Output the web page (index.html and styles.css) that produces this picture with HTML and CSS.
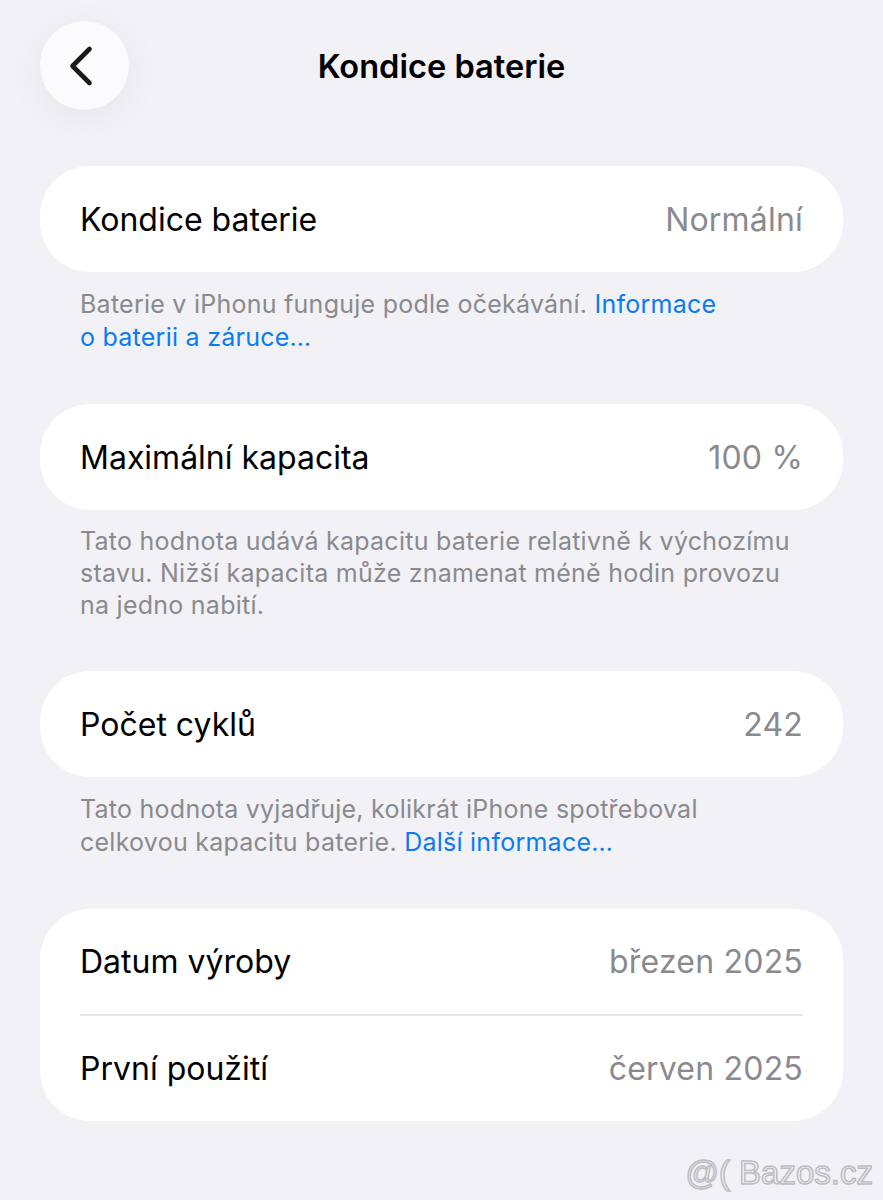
FILE: index.html
```html
<!DOCTYPE html>
<html lang="cs">
<head>
    <meta charset="UTF-8">
    <title>Kondice baterie</title>
    <link rel="stylesheet" href="styles.css">
</head>
<body>
<div class="screen">
    <header class="top-bar">
        <button class="back-btn" aria-label="Zpět">
            <svg width="26" height="42" viewBox="0 0 26 42"><path d="M21.5 4 L4.5 21 L21.5 38" fill="none" stroke="#1a1a1e" stroke-width="4.6" stroke-linecap="round" stroke-linejoin="round"/></svg>
        </button>
        <h1>Kondice baterie</h1>
    </header>

    <section class="card">
        <div class="row"><span>Kondice baterie</span><span class="value">Normální</span></div>
    </section>
    <p class="note">Baterie v iPhonu funguje podle očekávání. <a href="#">Informace<br>o baterii a záruce…</a></p>

    <section class="card">
        <div class="row"><span>Maximální kapacita</span><span class="value">100 %</span></div>
    </section>
    <p class="note note-long">Tato hodnota udává kapacitu baterie relativně k výchozímu<br>stavu. Nižší kapacita může znamenat méně hodin provozu<br>na jedno nabití.</p>

    <section class="card">
        <div class="row"><span>Počet cyklů</span><span class="value">242</span></div>
    </section>
    <p class="note">Tato hodnota vyjadřuje, kolikrát iPhone spotřeboval<br>celkovou kapacitu baterie. <a href="#">Další informace…</a></p>

    <section class="card">
        <div class="row row-short"><span>Datum výroby</span><span class="value">březen 2025</span></div>
        <div class="divider"></div>
        <div class="row row-short"><span>První použití</span><span class="value">červen 2025</span></div>
    </section>

    <div class="watermark">@( Bazos.cz</div>
</div>
</body>
</html>
```

FILE: styles.css
```css
body {
    margin: 0;
    background-color: #f1f1f6;
    font-family: Inter, "Liberation Sans", sans-serif;
    color: #000;
}

.screen {
    position: relative;
    height: 1200px;
    padding: 21px 40px 0;
    box-sizing: border-box;
    overflow: hidden;
}

.top-bar {
    position: relative;
    display: flex;
    align-items: center;
    justify-content: center;
    height: 89px;
    margin-bottom: 56px;
}

.top-bar h1 {
    margin: 0;
    font-size: 32.6px;
    font-weight: 600;
}

.back-btn {
    position: absolute;
    left: 0;
    top: 0;
    display: flex;
    align-items: center;
    justify-content: center;
    width: 89px;
    height: 89px;
    padding: 0 7px 0 0;
    border: none;
    border-radius: 50%;
    background-color: #fbfbfe;
    box-shadow: 0 8px 40px rgba(0, 0, 0, 0.05);
}

.card {
    padding: 0 40px;
    border-radius: 50px;
    background-color: #fff;
}

.row {
    display: flex;
    align-items: center;
    justify-content: space-between;
    height: 106px;
    font-size: 32px;
}

.row-short {
    height: 105px;
}

.value {
    color: #8a8a8e;
    letter-spacing: 0.2px;
}

.divider {
    height: 1.5px;
    background-color: #e6e6ea;
}

.note {
    margin: 16px 40px 51px;
    font-size: 25px;
    line-height: 32.5px;
    letter-spacing: 0.25px;
    color: #8a8a8e;
}

.note-long {
    margin-top: 15px;
    margin-bottom: 50px;
    line-height: 32px;
}

.note a {
    color: #0a7bf2;
    text-decoration: none;
}

.watermark {
    position: absolute;
    right: 10px;
    bottom: 8px;
    font-family: "Liberation Sans", sans-serif;
    font-size: 33px;
    color: #f1f1f6;
    -webkit-text-stroke: 1.5px #bdbdc1;
}
```
